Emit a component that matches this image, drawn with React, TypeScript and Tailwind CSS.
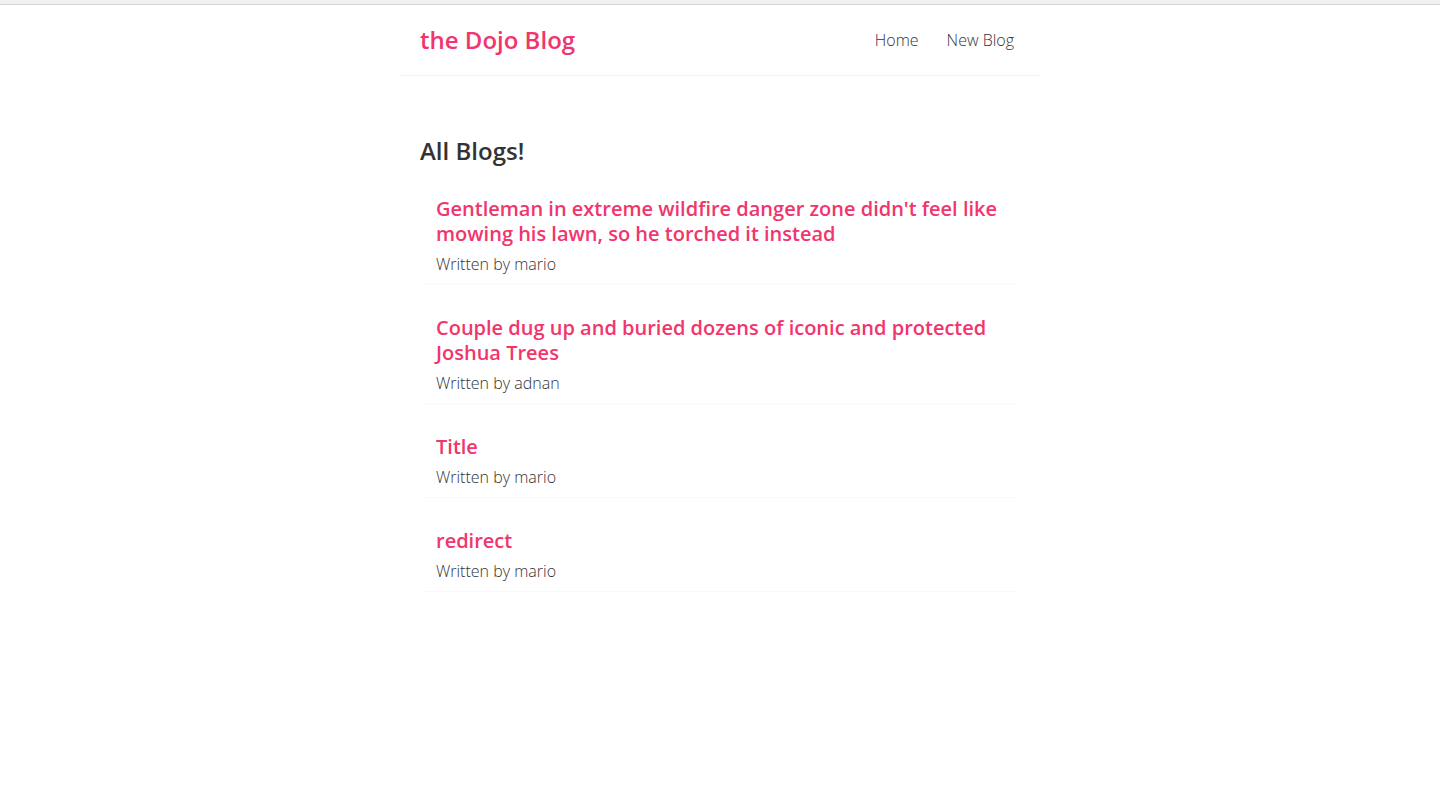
// Dojo blog — 목록 화면

const BLOGS = [
  { id: 1, title: "Gentleman in extreme wildfire danger zone didn't feel like mowing his lawn, so he torched it instead", author: 'mario' },
  { id: 2, title: 'Couple dug up and buried dozens of iconic and protected Joshua Trees', author: 'adnan' },
  { id: 3, title: 'Title', author: 'mario' },
  { id: 4, title: 'redirect', author: 'mario' },
];

const FONT = "font-['Open_Sans','Noto_Sans',sans-serif]";

export default function App() {
  return (
    <div className={`min-h-[798px] bg-white text-[#333] ${FONT}`}>
      <div className="h-[5px] border-b border-[#d3d6da] bg-[#f1f1f1]" />

      <nav className="mx-auto flex max-w-[640px] items-center border-b border-[#f2f2f2] p-5">
        <h1 className="text-[24px] leading-[30px] font-semibold text-[#f1356d]">the Dojo Blog</h1>
        <div className="ml-auto flex text-[16px] leading-5 font-light">
          <a href="#" className="ml-4 px-1.5">Home</a>
          <a href="#" className="ml-4 px-1.5">New Blog</a>
        </div>
      </nav>

      <main className="mx-auto my-10 max-w-[640px] p-5">
        <h2 className="text-[24px] leading-[30px] font-semibold">All Blogs!</h2>
        {BLOGS.map((blog) => (
          <div key={blog.id} className="mx-1 my-5 border-b border-[#fafafa] px-3 py-2.5">
            <h2 className="mb-2 text-[20px] leading-[25px] font-semibold text-[#f1356d]">{blog.title}</h2>
            <p className="text-[16px] leading-5 font-light">Written by {blog.author}</p>
          </div>
        ))}
      </main>
    </div>
  );
}
